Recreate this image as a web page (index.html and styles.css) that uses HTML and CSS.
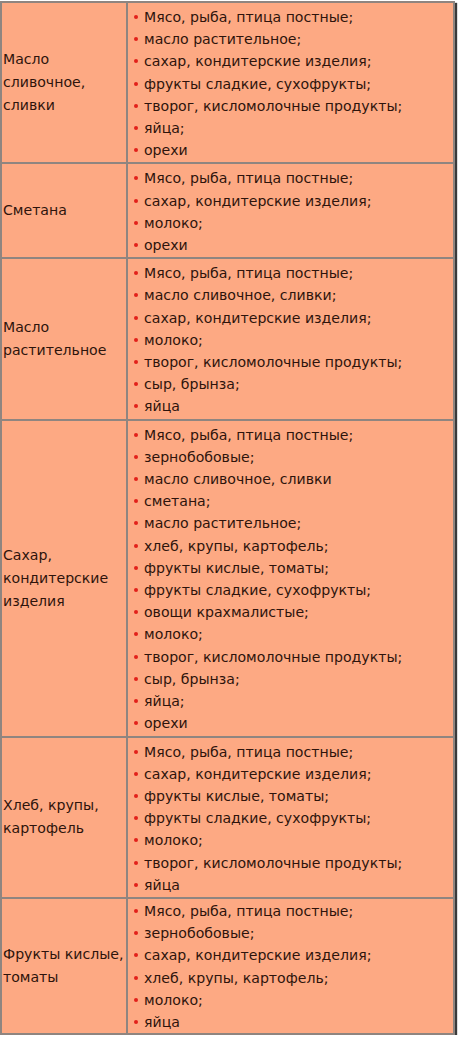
FILE: index.html
```html
<!DOCTYPE html>
<html lang="ru">
<head>
<meta charset="utf-8">
<link rel="stylesheet" href="styles.css">
</head>
<body>
<div class="frame">
<table class="combo">
<tr>
<td class="name">Масло сливочное, сливки</td>
<td class="list"><ul>
<li>Мясо, рыба, птица постные;</li>
<li>масло растительное;</li>
<li>сахар, кондитерские изделия;</li>
<li>фрукты сладкие, сухофрукты;</li>
<li>творог, кисломолочные продукты;</li>
<li>яйца;</li>
<li>орехи</li>
</ul></td>
</tr>
<tr>
<td class="name">Сметана</td>
<td class="list"><ul>
<li>Мясо, рыба, птица постные;</li>
<li>сахар, кондитерские изделия;</li>
<li>молоко;</li>
<li>орехи</li>
</ul></td>
</tr>
<tr>
<td class="name">Масло растительное</td>
<td class="list"><ul>
<li>Мясо, рыба, птица постные;</li>
<li>масло сливочное, сливки;</li>
<li>сахар, кондитерские изделия;</li>
<li>молоко;</li>
<li>творог, кисломолочные продукты;</li>
<li>сыр, брынза;</li>
<li>яйца</li>
</ul></td>
</tr>
<tr>
<td class="name">Сахар, кондитерские изделия</td>
<td class="list"><ul>
<li>Мясо, рыба, птица постные;</li>
<li>зернобобовые;</li>
<li>масло сливочное, сливки</li>
<li>сметана;</li>
<li>масло растительное;</li>
<li>хлеб, крупы, картофель;</li>
<li>фрукты кислые, томаты;</li>
<li>фрукты сладкие, сухофрукты;</li>
<li>овощи крахмалистые;</li>
<li>молоко;</li>
<li>творог, кисломолочные продукты;</li>
<li>сыр, брынза;</li>
<li>яйца;</li>
<li>орехи</li>
</ul></td>
</tr>
<tr>
<td class="name">Хлеб, крупы, картофель</td>
<td class="list"><ul>
<li>Мясо, рыба, птица постные;</li>
<li>сахар, кондитерские изделия;</li>
<li>фрукты кислые, томаты;</li>
<li>фрукты сладкие, сухофрукты;</li>
<li>молоко;</li>
<li>творог, кисломолочные продукты;</li>
<li>яйца</li>
</ul></td>
</tr>
<tr class="last">
<td class="name">Фрукты кислые, томаты</td>
<td class="list"><ul>
<li>Мясо, рыба, птица постные;</li>
<li>зернобобовые;</li>
<li>сахар, кондитерские изделия;</li>
<li>хлеб, крупы, картофель;</li>
<li>молоко;</li>
<li>яйца</li>
</ul></td>
</tr>
</table>
</div>
</body>
</html>
```

FILE: styles.css
```css
html, body {
  margin: 0;
  padding: 0;
  background: #ffffff;
}

.frame {
  width: 455px;
  margin-top: 1px;
  box-shadow: 2px 2px 1px #3a3a3a;
}

.combo {
  width: 455px;
  border-collapse: collapse;
  background: #fda983;
  font-family: "DejaVu Sans", sans-serif;
  font-size: 14.1px;
  color: #2e140c;
  border: 2px solid #a08a80;
}

.combo td {
  border: 2px solid #8f8580;
  vertical-align: middle;
  padding: 0;
}

.combo td.name {
  width: 123px;
  padding: 0 0 0 1px;
  line-height: 23px;
}

.combo td.list {
  padding: 3px 0 1px 3px;
}

.combo tr.last td.list {
  padding: 1px 0 0 3px;
}

.list ul {
  list-style: none;
  margin: 0;
  padding: 0;
}

.list li {
  line-height: 22.2px;
  padding-left: 13px;
  position: relative;
}

.list li::before {
  content: "";
  position: absolute;
  left: 3px;
  top: 9px;
  width: 4px;
  height: 4px;
  border-radius: 2px;
  background: #e2201a;
}
```
